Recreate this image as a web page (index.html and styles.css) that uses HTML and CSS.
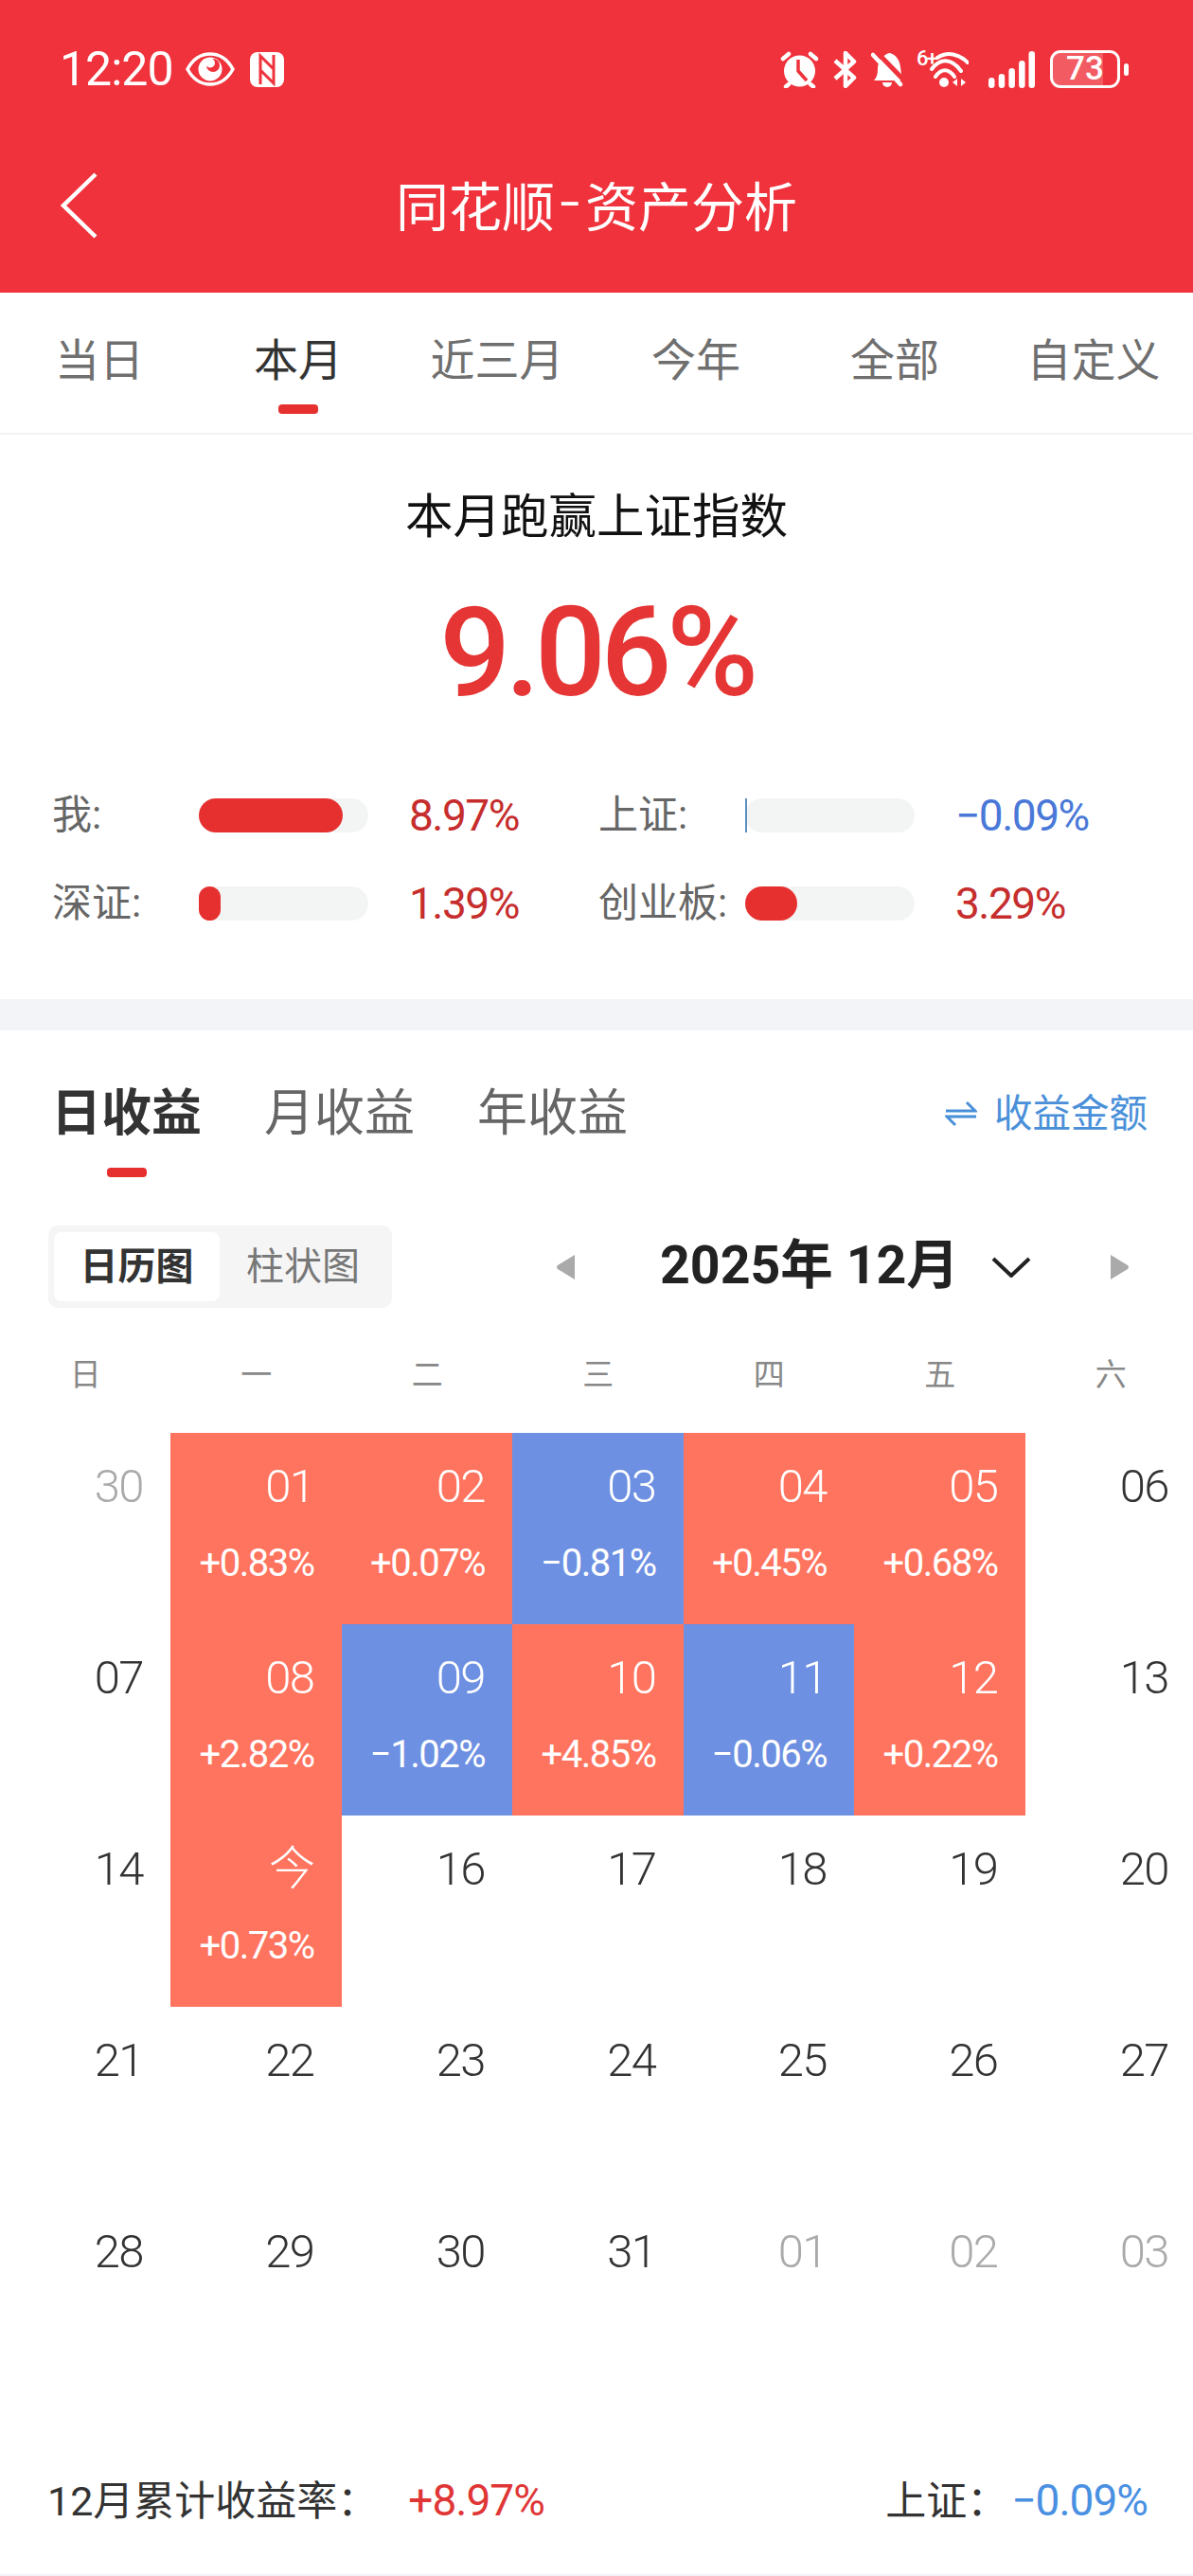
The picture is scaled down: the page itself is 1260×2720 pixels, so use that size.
FILE: index.html
```html
<!DOCTYPE html>
<html lang="zh-CN">
<head>
    <meta charset="UTF-8">
    <meta name="viewport" content="width=device-width, initial-scale=1.0">
    <title>同花顺-资产分析</title>
    <link rel="stylesheet" href="styles.css">
</head>
<body>
    <header class="header">
        <div class="status-bar">
            <div class="status-left">
                <span class="clock">12:20</span>
                <svg class="icon-eye" viewBox="0 0 52 36">
                    <path d="M2 18C8 7 16 2 26 2s18 5 24 16c-6 11-14 16-24 16S8 29 2 18z" fill="none" stroke="#fff" stroke-width="3.5"/>
                    <circle cx="26" cy="18" r="12.5" fill="#fff"/>
                    <circle cx="29" cy="14" r="7" fill="#ef323b"/>
                    <circle cx="26" cy="11.5" r="5" fill="#fff"/>
                </svg>
                <svg class="icon-nfc" viewBox="0 0 36 37">
                    <rect x="0" y="0" width="36" height="37" rx="8" fill="#fff"/>
                    <path d="M11 34V4l14 14M25 3v30L11 19" fill="none" stroke="#ef323b" stroke-width="3"/>
                </svg>
            </div>
            <div class="status-right">
                <svg class="icon-alarm" viewBox="0 0 41 39">
                    <circle cx="20.5" cy="21" r="16.5" fill="#fff"/>
                    <path d="M19 9v12l9 10" fill="none" stroke="#ef323b" stroke-width="3.5"/>
                    <path d="M3 8l6-5M38 8l-6-5M9 35l-3 2.500M32 35l3 2.500" fill="none" stroke="#fff" stroke-width="4.500" stroke-linecap="round"/>
                </svg>
                <svg class="icon-bt" viewBox="0 0 27 39">
                    <path d="M3 10l20 18-9 9V2l9 9L3 29" fill="none" stroke="#fff" stroke-width="4.500" stroke-linejoin="round"/>
                </svg>
                <svg class="icon-bell" viewBox="0 0 34 39">
                    <path d="M3 31c3-3 4-7 4-12C7 11 12 4 19 2c7 1 11 7 12 15l2 14z" fill="#fff"/>
                    <path d="M12 33h10a5 5 0 0 1-10 0z" fill="#fff"/>
                    <path d="M5 0l30 31" stroke="#ef323b" stroke-width="5"/>
                    <path d="M2 4l29 31" stroke="#fff" stroke-width="4.500" stroke-linecap="round"/>
                </svg>
                <svg class="icon-wifi" viewBox="0 0 55 40">
                    <text x="0" y="16" class="wifi-gen">6+</text>
                    <path d="M22 8c11-7 23-4 32 5M16 20c9-12 21-12 31 2M20 28c6-9 14-9 20 0" fill="none" stroke="#fff" stroke-width="4" stroke-linecap="round"/>
                    <circle cx="29" cy="34" r="5" fill="#fff"/>
                    <path d="M43 30v8l-5-4zM47 30v8l5-4z" fill="#fff"/>
                </svg>
                <svg class="icon-signal" viewBox="0 0 49 39">
                    <rect x="0" y="28" width="6.500" height="11" rx="3.200" fill="#fff"/>
                    <rect x="10.700" y="24" width="6.500" height="15" rx="3.200" fill="#fff"/>
                    <rect x="21.400" y="18" width="6.500" height="21" rx="3.200" fill="#fff"/>
                    <rect x="32.100" y="10" width="6.500" height="29" rx="3.200" fill="#fff"/>
                    <rect x="42.500" y="0" width="6.500" height="39" rx="3.200" fill="#fff"/>
                </svg>
                <div class="battery"><span class="battery-level">73</span></div>
                <span class="battery-cap"></span>
            </div>
        </div>
        <div class="nav-bar">
            <svg class="back" viewBox="0 0 40 70">
                <path d="M37 2L3 35l34 33" fill="none" stroke="#fff" stroke-width="4.500"/>
            </svg>
            <h1 class="nav-title">同花顺<span class="nav-dash">-</span>资产分析</h1>
        </div>
    </header>

    <nav class="period-tabs">
        <div class="period-tab">当日</div>
        <div class="period-tab active">本月<span class="tab-mark"></span></div>
        <div class="period-tab">近三月</div>
        <div class="period-tab">今年</div>
        <div class="period-tab">全部</div>
        <div class="period-tab">自定义</div>
    </nav>

    <section class="summary">
        <h2 class="summary-title">本月跑赢上证指数</h2>
        <div class="summary-value">9.06%</div>
        <div class="stats">
            <div class="stat">
                <span class="stat-label">我:</span>
                <span class="stat-bar"><span class="stat-fill" style="width: 85%"></span></span>
                <span class="stat-value up">8.97%</span>
            </div>
            <div class="stat">
                <span class="stat-label">上证:</span>
                <span class="stat-bar"><span class="stat-fill down" style="width: 2px"></span></span>
                <span class="stat-value down">−0.09%</span>
            </div>
            <div class="stat">
                <span class="stat-label">深证:</span>
                <span class="stat-bar"><span class="stat-fill" style="width: 13%"></span></span>
                <span class="stat-value up">1.39%</span>
            </div>
            <div class="stat">
                <span class="stat-label">创业板:</span>
                <span class="stat-bar"><span class="stat-fill" style="width: 31%"></span></span>
                <span class="stat-value up">3.29%</span>
            </div>
        </div>
    </section>

    <section class="profit">
        <div class="profit-head">
            <div class="profit-tabs">
                <div class="profit-tab active">日收益<span class="tab-mark"></span></div>
                <div class="profit-tab">月收益</div>
                <div class="profit-tab">年收益</div>
            </div>
            <div class="profit-switch">
                <svg class="icon-swap" viewBox="0 0 34 28">
                    <path d="M1 11h31L23 2M33 17H2l9 9" fill="none" stroke="#4a90d9" stroke-width="3"/>
                </svg>
                收益金额
            </div>
        </div>

        <div class="toolbar">
            <div class="segment">
                <div class="segment-item active">日历图</div>
                <div class="segment-item">柱状图</div>
            </div>
            <svg class="month-arrow prev" viewBox="0 0 21 28"><path d="M20 1v26L2 16q-2-2 0-4z" fill="#aaa"/></svg>
            <div class="month-title">2025年 12月</div>
            <svg class="month-chevron" viewBox="0 0 42 22"><path d="M2 2l19 18L40 2" fill="none" stroke="#222" stroke-width="4"/></svg>
            <svg class="month-arrow next" viewBox="0 0 21 28"><path d="M1 1v26l18-11q2-2 0-4z" fill="#aaa"/></svg>
        </div>

        <div class="weekdays">
            <span>日</span><span>一</span><span>二</span><span>三</span><span>四</span><span>五</span><span>六</span>
        </div>

        <div class="calendar">
            <div class="day muted"><span class="day-num">30</span></div>
            <div class="day gain"><span class="day-num">01</span><span class="day-pct">+0.83%</span></div>
            <div class="day gain"><span class="day-num">02</span><span class="day-pct">+0.07%</span></div>
            <div class="day loss"><span class="day-num">03</span><span class="day-pct">−0.81%</span></div>
            <div class="day gain"><span class="day-num">04</span><span class="day-pct">+0.45%</span></div>
            <div class="day gain"><span class="day-num">05</span><span class="day-pct">+0.68%</span></div>
            <div class="day"><span class="day-num">06</span></div>

            <div class="day"><span class="day-num">07</span></div>
            <div class="day gain"><span class="day-num">08</span><span class="day-pct">+2.82%</span></div>
            <div class="day loss"><span class="day-num">09</span><span class="day-pct">−1.02%</span></div>
            <div class="day gain"><span class="day-num">10</span><span class="day-pct">+4.85%</span></div>
            <div class="day loss"><span class="day-num">11</span><span class="day-pct">−0.06%</span></div>
            <div class="day gain"><span class="day-num">12</span><span class="day-pct">+0.22%</span></div>
            <div class="day"><span class="day-num">13</span></div>

            <div class="day"><span class="day-num">14</span></div>
            <div class="day gain"><span class="day-num">今</span><span class="day-pct">+0.73%</span></div>
            <div class="day"><span class="day-num">16</span></div>
            <div class="day"><span class="day-num">17</span></div>
            <div class="day"><span class="day-num">18</span></div>
            <div class="day"><span class="day-num">19</span></div>
            <div class="day"><span class="day-num">20</span></div>

            <div class="day"><span class="day-num">21</span></div>
            <div class="day"><span class="day-num">22</span></div>
            <div class="day"><span class="day-num">23</span></div>
            <div class="day"><span class="day-num">24</span></div>
            <div class="day"><span class="day-num">25</span></div>
            <div class="day"><span class="day-num">26</span></div>
            <div class="day"><span class="day-num">27</span></div>

            <div class="day"><span class="day-num">28</span></div>
            <div class="day"><span class="day-num">29</span></div>
            <div class="day"><span class="day-num">30</span></div>
            <div class="day"><span class="day-num">31</span></div>
            <div class="day muted"><span class="day-num">01</span></div>
            <div class="day muted"><span class="day-num">02</span></div>
            <div class="day muted"><span class="day-num">03</span></div>
        </div>

        <div class="totals">
            <div class="totals-side">12月累计收益率：<span class="totals-gain">+8.97%</span></div>
            <div class="totals-side">上证：<span class="totals-loss">−0.09%</span></div>
        </div>
    </section>
    <div class="bottom-band"></div>
</body>
</html>
```

FILE: styles.css
```css
* {
    box-sizing: border-box;
}
html, body {
    overflow-x: hidden;
}
body {
    margin: 0;
    background-color: #fff;
    color: #333;
    font-family: Roboto, "Noto Sans CJK SC", sans-serif;
}
svg {
    display: block;
    flex: none;
}

/* red header */
.header {
    height: 309px;
    background-color: #ef323b;
    color: #fff;
}
.status-bar {
    display: flex;
    justify-content: space-between;
    align-items: center;
    height: 146px;
    padding: 0 68px 0 63px;
}
.status-left,
.status-right {
    display: flex;
    align-items: center;
}
.clock {
    width: 133px;
    font-size: 50px;
    letter-spacing: -1px;
}
.icon-eye {
    width: 52px;
    height: 36px;
}
.icon-nfc {
    width: 36px;
    height: 37px;
    margin-left: 16px;
}
.status-right {
    gap: 14px;
}
.icon-alarm {
    width: 41px;
    height: 39px;
}
.icon-bt {
    width: 27px;
    height: 39px;
}
.icon-bell {
    width: 34px;
    height: 39px;
}
.icon-wifi {
    width: 55px;
    height: 40px;
}
.wifi-gen {
    fill: #fff;
    font-size: 22px;
    font-weight: 500;
    letter-spacing: -2px;
}
.icon-signal {
    width: 49px;
    height: 39px;
    margin: 0 2px 0 7px;
}
.battery {
    display: flex;
    justify-content: center;
    align-items: center;
    width: 74px;
    height: 40px;
    border: 3px solid #fff;
    border-radius: 11px;
    background: linear-gradient(to right, rgba(255, 255, 255, 0.2) 78%, transparent 78%);
}
.battery-level {
    font-size: 35px;
    font-weight: 500;
    line-height: 34px;
}
.battery-cap {
    width: 5px;
    height: 13px;
    margin-left: -10px;
    border-radius: 3px;
    background-color: #fff;
}
.nav-bar {
    display: flex;
    align-items: center;
    height: 136px;
    padding-left: 64px;
}
.back {
    width: 40px;
    height: 70px;
    margin-top: 6px;
}
.nav-title {
    flex: 1;
    margin: 0 104px 0 0;
    font-size: 56px;
    font-weight: 400;
    text-align: center;
}
.nav-dash {
    padding: 0 5px;
    font-size: 76px;
    font-weight: 300;
    line-height: 0;
}

/* period tabs */
.period-tabs {
    display: flex;
    height: 150px;
    border-bottom: 2px solid #f2f4f5;
}
.period-tab {
    display: flex;
    flex-direction: column;
    align-items: center;
    flex: 1;
    padding-top: 44px;
    color: #6f6f6f;
    font-size: 47px;
    line-height: 56px;
}
.period-tab.active {
    color: #333;
}
.tab-mark {
    display: block;
    width: 42px;
    height: 10px;
    border-radius: 4px;
    background-color: #e63030;
}
.period-tab .tab-mark {
    margin-top: 18px;
}

/* summary */
.summary {
    height: 596px;
    padding-top: 52px;
}
.summary-title {
    margin: 0;
    color: #111;
    font-size: 50.500px;
    font-weight: 400;
    line-height: 70px;
    text-align: center;
}
.summary-value {
    margin-top: 33px;
    color: #e53535;
    font-size: 132px;
    font-weight: 500;
    letter-spacing: -5.500px;
    line-height: 150px;
    text-align: center;
}
.stats {
    display: grid;
    grid-template-columns: 577px 577px;
    row-gap: 37px;
    margin-top: 69px;
    padding-left: 55px;
}
.stat {
    display: flex;
    align-items: center;
    height: 56px;
}
.stat-label {
    width: 155px;
    color: #666;
    font-size: 42px;
    line-height: 56px;
}
.stat-bar {
    display: block;
    width: 179px;
    height: 36px;
    border-radius: 18px;
    background-color: #f3f5f5;
}
.stat-fill {
    display: block;
    height: 100%;
    border-radius: 18px;
    background-color: #e63030;
}
.stat-fill.down {
    border-radius: 0;
    background-color: #5b8fc0;
}
.stat-value {
    margin-left: 43px;
    font-size: 46px;
    letter-spacing: -1.500px;
}
.stat-value.up {
    color: #c62d2d;
}
.stat-value.down {
    color: #4a78d8;
}

/* profit */
.profit {
    padding-top: 52px;
    border-top: 33px solid #f2f4f8;
}
.profit-head {
    display: flex;
    justify-content: space-between;
    align-items: flex-start;
    padding: 0 48px 0 54px;
}
.profit-tabs {
    display: flex;
    gap: 66px;
}
.profit-tab {
    display: flex;
    flex-direction: column;
    align-items: center;
    color: #666;
    font-size: 53px;
    line-height: 72px;
}
.profit-tab.active {
    color: #333;
    font-weight: 700;
}
.profit-tab .tab-mark {
    margin-top: 21px;
}
.profit-switch {
    display: flex;
    align-items: center;
    gap: 18px;
    color: #4a90d9;
    font-size: 40.500px;
    line-height: 72px;
}
.icon-swap {
    width: 34px;
    height: 28px;
}
.toolbar {
    display: flex;
    align-items: center;
    margin-top: 51px;
    padding-left: 51px;
}
.segment {
    display: flex;
    width: 363px;
    height: 87px;
    padding: 7px 6px;
    border-radius: 10px;
    background-color: #f5f5f5;
}
.segment-item {
    flex: 1;
    color: #777;
    font-size: 40px;
    line-height: 73px;
    text-align: center;
}
.segment-item.active {
    flex: none;
    width: 175px;
    border-radius: 8px;
    background-color: #fff;
    color: #333;
    font-weight: 700;
}
.month-arrow {
    width: 21px;
    height: 28px;
}
.month-arrow.prev {
    margin: 0 89px 0 173px;
}
.month-arrow.next {
    margin-left: 83px;
}
.month-title {
    margin-top: -2px;
    color: #222;
    font-size: 55.500px;
    font-weight: 700;
    line-height: 70px;
}
.month-chevron {
    width: 42px;
    height: 22px;
    margin-left: 34px;
}
.weekdays,
.calendar {
    display: grid;
    grid-template-columns: repeat(7, 180.500px);
    width: 1264px;
}
.weekdays {
    margin-top: 49px;
    color: #888;
    font-size: 33px;
    line-height: 44px;
    text-align: center;
}
.calendar {
    grid-auto-rows: 202px;
    margin-top: 39px;
    margin-left: -0.500px;
}
.day {
    display: flex;
    flex-direction: column;
    align-items: flex-end;
    padding: 27px 29px 0 0;
}
.day-num {
    font-size: 49px;
    font-weight: 300;
    letter-spacing: -1.500px;
    line-height: 60px;
}
.day-pct {
    margin-top: 26px;
    font-size: 40px;
    letter-spacing: -1.500px;
    line-height: 50px;
}
.day.muted {
    color: #aaa;
}
.day.gain {
    background-color: #ff745f;
    color: #fff;
}
.day.loss {
    background-color: #6e90e2;
    color: #fff;
}
.totals {
    display: flex;
    justify-content: space-between;
    align-items: baseline;
    margin-top: 87px;
    padding: 0 48px 0 50px;
    color: #333;
    font-size: 43px;
    line-height: 60px;
}
.totals-gain {
    margin-left: 32px;
    color: #e03636;
    font-size: 46px;
    letter-spacing: -1px;
}
.totals-loss {
    margin-left: 4px;
    color: #4a90e2;
    font-size: 46px;
    letter-spacing: -1px;
}
.bottom-band {
    height: 3px;
    margin-top: 47px;
    background-color: #f2f4f8;
}
```
